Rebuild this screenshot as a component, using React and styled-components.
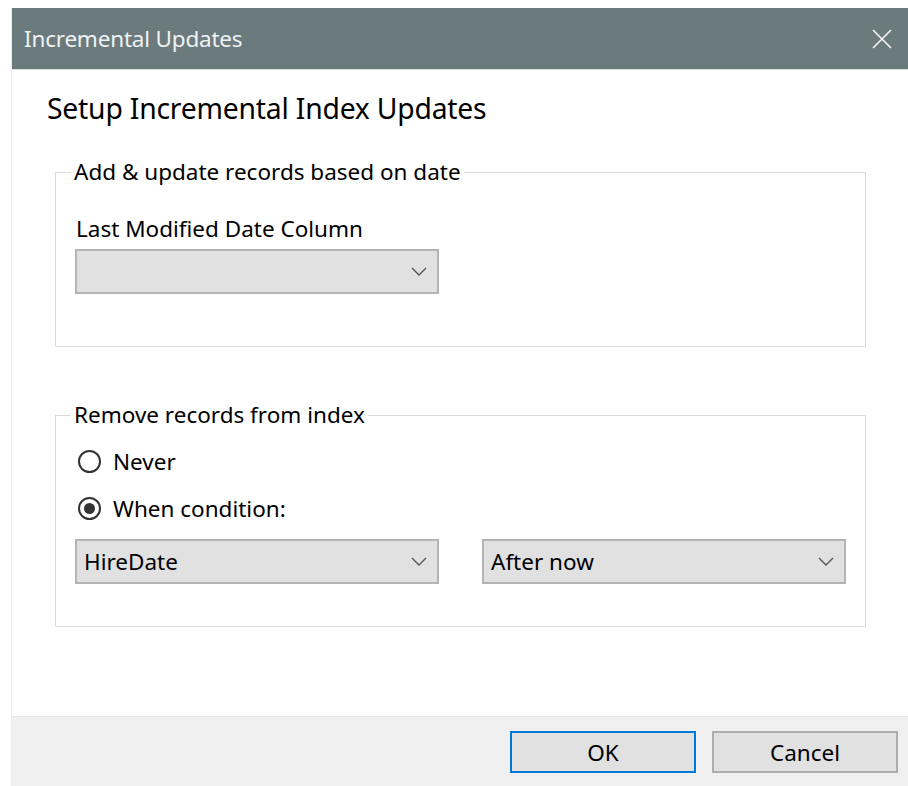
import React from "react"
import styled, { createGlobalStyle } from "styled-components"

const GlobalStyle = createGlobalStyle`
  html, body {
    margin: 0;
    padding: 0;
    background: #ffffff;
  }
  body {
    font-family: "Noto Sans", "Open Sans", "Liberation Sans", sans-serif;
    color: #000;
  }
`

const Page = styled.div`
  height: 786px;
  padding: 8px 0 0 11px;
  box-sizing: border-box;
  overflow: hidden;
`

const Window = styled.div`
  display: flex;
  flex-direction: column;
  width: 897px;
  height: 778px;
  border-left: 1px solid #ececec;
  box-sizing: border-box;
`

const TitleBar = styled.div`
  display: flex;
  align-items: center;
  justify-content: space-between;
  height: 61px;
  padding: 0 14px 0 12px;
  background: #6b7a7d;
  border-bottom: 1px solid #d6dadb;
  color: #eef2f3;
  font-size: 22.5px;
  letter-spacing: -0.2px;
`

const CloseButton = styled.button`
  display: flex;
  align-items: center;
  justify-content: center;
  width: 24px;
  height: 24px;
  padding: 0;
  border: 0;
  background: transparent;
  color: #f4f6f6;
  cursor: pointer;
`

const Content = styled.div`
  flex: 1;
  padding: 20px 42px 0 43px;
`

const Heading = styled.h1`
  margin: 0 0 32px -8px;
  font-size: 28.3px;
  font-weight: 400;
  line-height: 36px;
  letter-spacing: -0.2px;
`

const Group = styled.fieldset`
  margin: 0 0 ${p => p.$gap || 0}px 0;
  padding: 4px 18px ${p => p.$bottom}px 19px;
  border: 1px solid #dcdcdc;
  min-width: 0;
`

const Legend = styled.legend`
  margin-left: -4px;
  padding: 0 3px;
  font-size: 22.5px;
  line-height: 28px;
`

const FieldLabel = styled.div`
  margin: 25px 0 6px 1px;
  font-size: 22.5px;
  line-height: 28px;
`

const Row = styled.div`
  display: grid;
  grid-template-columns: 364px 364px;
  column-gap: 43px;
`

const Combo = styled.div`
  display: flex;
  align-items: center;
  justify-content: space-between;
  height: 45px;
  padding: 0 10px 0 7px;
  background: #e1e1e1;
  border: 2px solid #b4b4b4;
  box-sizing: border-box;
  font-size: 22.5px;
`

const RadioList = styled.div`
  display: flex;
  flex-direction: column;
  gap: 19px;
  margin: 14px 0 17px 3px;
`

const RadioRow = styled.label`
  display: flex;
  align-items: center;
  gap: 12px;
  height: 28px;
  font-size: 22.5px;
`

const RadioCircle = styled.span`
  display: flex;
  align-items: center;
  justify-content: center;
  width: 23px;
  height: 23px;
  border: 2px solid #333333;
  border-radius: 50%;
  box-sizing: border-box;
  background: #fff;

  &::after {
    content: "";
    display: ${p => (p.$checked ? "block" : "none")};
    width: 11px;
    height: 11px;
    border-radius: 50%;
    background: #333333;
  }
`

const Footer = styled.div`
  display: flex;
  justify-content: flex-end;
  gap: 16px;
  height: 70px;
  padding: 14px 10px 0 0;
  box-sizing: border-box;
  background: #f0f0f0;
  border-top: 1px solid #e8e8e8;
`

const Button = styled.button`
  width: 186px;
  height: 42px;
  background: #e1e1e1;
  border: 2px solid ${p => (p.$primary ? "#0078d7" : "#adadad")};
  font-family: inherit;
  font-size: 22.5px;
  color: #000;
  padding: 0;
`

const Chevron = () => (
  <svg width="16" height="9" viewBox="0 0 16 9">
    <path d="M1 1 L8 8 L15 1" fill="none" stroke="#555" strokeWidth="1.4" />
  </svg>
)

const CloseIcon = () => (
  <svg width="20" height="20" viewBox="0 0 20 20">
    <path d="M1 1 L19 19 M19 1 L1 19" stroke="currentColor" strokeWidth="1.6" />
  </svg>
)

const Select = ({ value }) => (
  <Combo>
    <span>{value}</span>
    <Chevron />
  </Combo>
)

const Radio = ({ checked, children }) => (
  <RadioRow>
    <RadioCircle $checked={checked} />
    {children}
  </RadioRow>
)

export default function App() {
  return (
    <Page>
      <GlobalStyle />
      <Window>
        <TitleBar>
          <span>Incremental Updates</span>
          <CloseButton aria-label="Close">
            <CloseIcon />
          </CloseButton>
        </TitleBar>
        <Content>
          <Heading>Setup Incremental Index Updates</Heading>

          <Group $gap={54} $bottom={52}>
            <Legend>Add &amp; update records based on date</Legend>
            <FieldLabel>Last Modified Date Column</FieldLabel>
            <Row>
              <Select value="" />
            </Row>
          </Group>

          <Group $bottom={42}>
            <Legend>Remove records from index</Legend>
            <RadioList>
              <Radio>Never</Radio>
              <Radio checked>When condition:</Radio>
            </RadioList>
            <Row>
              <Select value="HireDate" />
              <Select value="After now" />
            </Row>
          </Group>
        </Content>
        <Footer>
          <Button $primary>OK</Button>
          <Button>Cancel</Button>
        </Footer>
      </Window>
    </Page>
  )
}
